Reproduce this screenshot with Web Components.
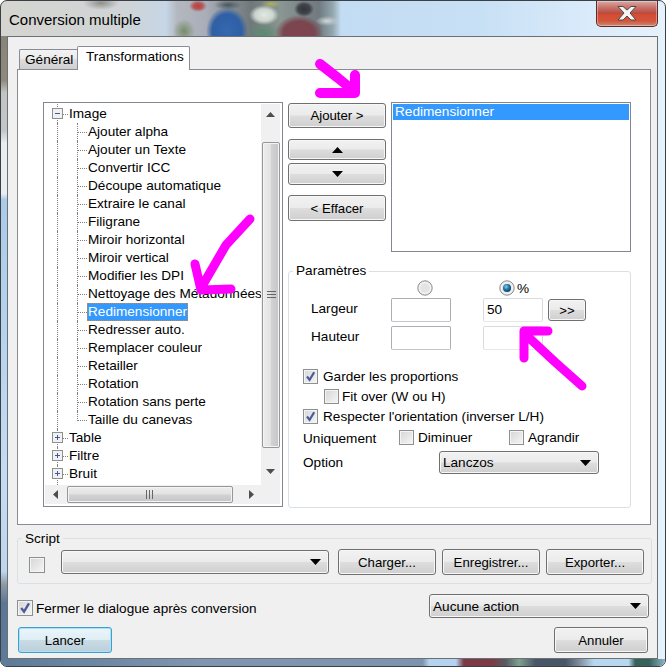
<!DOCTYPE html>
<html lang="fr">
<head>
<meta charset="utf-8">
<title>Conversion multiple</title>
<style>
  html, body { margin: 0; padding: 0; background: #fff; }
  body { width: 666px; height: 667px; overflow: hidden; font: 13.6px "Liberation Sans", Arial, sans-serif; color: #000; }
</style>
</head>
<body>
<win-dialog heading="Conversion multiple">
  <win-tabs>
    <span slot="tab">Général</span>
    <span slot="tab-active">Transformations</span>

    <div class="pane" style="display:grid;grid-template-columns:240px 98px 240px;column-gap:5px;grid-template-rows:150px 245px;row-gap:11px;">
      <win-tree style="grid-row:1 / span 2;">
        <tree-node kind="open" first>Image</tree-node>
        <tree-node>Ajouter alpha</tree-node>
        <tree-node>Ajouter un Texte</tree-node>
        <tree-node>Convertir ICC</tree-node>
        <tree-node>Découpe automatique</tree-node>
        <tree-node>Extraire le canal</tree-node>
        <tree-node>Filigrane</tree-node>
        <tree-node>Miroir horizontal</tree-node>
        <tree-node>Miroir vertical</tree-node>
        <tree-node>Modifier les DPI</tree-node>
        <tree-node>Nettoyage des Métadonnées</tree-node>
        <tree-node selected>Redimensionner</tree-node>
        <tree-node>Redresser auto.</tree-node>
        <tree-node>Remplacer couleur</tree-node>
        <tree-node>Retailler</tree-node>
        <tree-node>Rotation</tree-node>
        <tree-node>Rotation sans perte</tree-node>
        <tree-node last>Taille du canevas</tree-node>
        <tree-node kind="closed">Table</tree-node>
        <tree-node kind="closed">Filtre</tree-node>
        <tree-node kind="closed" tail>Bruit</tree-node>
      </win-tree>

      <div style="display:flex;flex-direction:column;padding-top:1px;">
        <win-button h="25">Ajouter &gt;</win-button>
        <win-button h="21" style="margin-top:11px;"><win-arrow dir="up"></win-arrow></win-button>
        <win-button h="22" style="margin-top:3px;"><win-arrow dir="down"></win-arrow></win-button>
        <win-button h="26" style="margin-top:10px;">&lt; Effacer</win-button>
      </div>

      <win-list>
        <span>Redimensionner</span>
      </win-list>

      <win-group label="Paramètres" style="grid-column:2 / span 2;">
        <div style="display:flex;flex-direction:column;padding:1px 0 0 14px;">
          <div style="display:grid;grid-template-columns:88px 60px 32px 60px 5px 38px;grid-template-rows:18px 24px 28px;align-items:center;">
            <span></span>
            <win-radio style="justify-self:center;margin:-2px 0 0 8px;"></win-radio>
            <span></span>
            <div style="display:flex;align-items:center;gap:2px;margin:-2px 0 0 16px;"><win-radio checked></win-radio><span>%</span></div>
            <span></span><span></span>

            <span style="padding-left:8px;margin-bottom:4px;">Largeur</span>
            <win-input></win-input>
            <span></span>
            <win-input value="50" soft></win-input>
            <span></span>
            <win-button h="22">&gt;&gt;</win-button>

            <span style="padding-left:8px;align-self:end;margin-bottom:6px;">Hauteur</span>
            <win-input style="align-self:end;"></win-input>
            <span></span>
            <win-input soft style="align-self:end;"></win-input>
            <span></span><span></span>
          </div>

          <div style="display:flex;flex-direction:column;gap:5px;margin-top:19px;">
            <win-check checked style="--gap:5px;">Garder les proportions</win-check>
            <win-check style="margin-left:21px;--gap:3px;">Fit over (W ou H)</win-check>
            <win-check checked style="--gap:5px;">Respecter l'orientation (inverser L/H)</win-check>
            <div style="display:grid;grid-template-columns:96px 110px auto;align-items:center;height:15px;">
              <span style="margin-top:2px;">Uniquement</span>
              <win-check>Diminuer</win-check>
              <win-check>Agrandir</win-check>
            </div>
          </div>

          <div style="display:grid;grid-template-columns:136px 160px;align-items:center;margin-top:7px;">
            <span>Option</span>
            <win-select h="23" style="width:160px;">Lanczos</win-select>
          </div>
        </div>
      </win-group>
    </div>
  </win-tabs>

  <win-group label="Script" style="margin-top:4px;width:635px;height:55px;--legend-top:2px;">
    <div style="display:flex;align-items:center;padding:2px 0 0 11px;">
      <win-check style="margin:5px 16px 0 0;--gap:0;" large></win-check>
      <win-select h="24" style="width:268px;margin-right:9px;"></win-select>
      <win-button h="26" style="width:98px;margin-right:6px;">Charger...</win-button>
      <win-button h="26" style="width:98px;margin-right:6px;">Enregistrer...</win-button>
      <win-button h="26" style="width:98px;">Exporter...</win-button>
    </div>
  </win-group>

  <div style="display:flex;justify-content:space-between;align-items:center;margin-top:10px;padding-right:3px;height:24px;">
    <win-check checked large style="margin-top:4px;--gap:3px;">Fermer le dialogue après conversion</win-check>
    <win-select h="24" style="width:220px;">Aucune action</win-select>
  </div>

  <div style="display:flex;justify-content:space-between;margin-top:9px;padding:0 4px 0 1px;">
    <win-button h="26" default style="width:94px;">Lancer</win-button>
    <win-button h="26" style="width:94px;">Annuler</win-button>
  </div>
</win-dialog>
<ink-marks></ink-marks>

<script>
// small helper so every element sets up its shadow root the same way
function shadow(el, html) {
  el.attachShadow({ mode: "open" }).innerHTML = html;
}

class WinDialog extends HTMLElement {
  connectedCallback() {
    shadow(this, `<style>
      :host { display: block; position: relative; box-sizing: border-box; width: 666px; height: 667px; padding: 35px 7px 7px 6px;
        border: 1px solid #3a4046; border-radius: 7px; overflow: hidden;
        background:
          radial-gradient(ellipse 9px 6px at 197px 5px, #b8403f 0, rgba(184,64,63,.8) 50%, rgba(184,64,63,0) 100%),
          radial-gradient(ellipse 14px 5px at 227px 4px, #46565a 0, rgba(70,86,90,0) 100%),
          radial-gradient(ellipse 21px 24px at 226px 30px, #3468b0 0, #2f5fa4 70%, rgba(47,95,164,0) 100%),
          radial-gradient(ellipse 10px 8px at 303px 8px, #34343c 0, rgba(52,52,60,.8) 60%, rgba(52,52,60,0) 100%),
          radial-gradient(ellipse 24px 18px at 298px 32px, #80444f 0, #7a4650 65%, rgba(122,70,80,0) 100%),
          radial-gradient(ellipse 15px 10px at 263px 14px, #e0eae2 0, rgba(224,234,226,.8) 60%, rgba(224,234,226,0) 100%),
          radial-gradient(ellipse 18px 10px at 262px 32px, #5a8a70 0, rgba(90,138,112,0) 100%),
          radial-gradient(ellipse 10px 4px at 270px 3px, #b0b060 0, rgba(176,176,96,0) 100%),
          radial-gradient(ellipse 11px 12px at 183px 30px, #768c68 0, rgba(118,140,104,0) 100%),
          radial-gradient(ellipse 12px 5px at 326px 20px, #d0d8da 0, rgba(208,216,218,0) 100%),
          radial-gradient(ellipse 18px 7px at 100px 2px, #8f8f8a 0, rgba(143,143,138,0) 100%),
          linear-gradient(to right, #d5d5d0 0, #d0d4d6 120px, #c6d6e6 165px, #b3b8c0 176px, #a8adb8 205px, #70787a 250px, #8a9692 280px, #707a80 318px, #94a8b0 332px, #c2dcf3 340px, #c8e0f5 480px, #dcecfb 600px, #e6f2fc 666px);
      }
      .frame-left { position: absolute; left: 0; top: 35px; bottom: 0; width: 6px;
        background: linear-gradient(to bottom, #8a8478 0, #8f897c 7%, #c4c4c2 9%, #c2c6c8 15%, #e8eef2 17%, #e8eef2 25%, #a9cbe8 26%, #c4dcf3 70%, #bcd6ee 85%, #8f9aa5 87%, #5a7896 90%, #5d7b98 100%); }
      .frame-bottom { position: absolute; left: 0; right: 0; bottom: 0; height: 7px;
        background: linear-gradient(to right, #5d7b98 0, #7f96b0 30%, #7c94ae 63.5%, #b5d3ee 64.5%, #b5d3ee 68.5%, #7c3a46 69.7%, #7c3a46 74%, #555b62 76%, #7fa090 78%, #4a5568 80.5%, #4a5568 85%, #7d8a98 87%, #b8d8f0 89.3%, #b8d8f0 94.5%, #37625a 95.5%, #37625a 97.6%, #8fb4c8 100%); }
      header { position: absolute; left: 8px; right: 7px; top: 0; height: 35px; display: flex; justify-content: space-between; }
      h1 { margin: 0; font: 400 15px/38px "Liberation Sans", Arial, sans-serif; color: #000; }
      .close { width: 62px; height: 26px; box-sizing: border-box; border: 1px solid #5c2b28; border-top: 0; border-radius: 0 0 5px 5px;
        display: flex; align-items: center; justify-content: center; box-shadow: inset 0 0 0 1px rgba(255,255,255,.35);
        background: linear-gradient(to bottom, #d9a9a3 0, #c9746c 25%, #b94a40 50%, #d64a30 52%, #d2563c 80%, #c98a78 100%); }
      .client { position: relative; box-sizing: border-box; height: 623px; padding: 9px 5px 0 9px; border: 1px solid #6b7075; background: #f0f0f0; }
    </style>
    <div class="frame-left"></div><div class="frame-bottom"></div>
    <header><h1>${this.getAttribute("heading")}</h1>
      <div class="close"><svg width="20" height="15" viewBox="0 0 20 15"><path d="M1 0.5h5l4 3.6 4-3.6h5l-6 6.5 6 7h-5l-4-4-4 4h-5l6-7z" fill="#f4f4f4" stroke="#4a4a4a" stroke-width="1"/></svg></div>
    </header>
    <div class="client"><slot></slot></div>`);
  }
}

class WinTabs extends HTMLElement {
  connectedCallback() {
    shadow(this, `<style>
      :host { display: block; width: 634px; }
      .strip { display: flex; align-items: flex-end; height: 23px; padding-left: 2px; position: relative; z-index: 1; }
      .tab { box-sizing: border-box; border: 1px solid #898c95; border-bottom: 0; border-right: 0; height: 20px; width: 58px; padding-left: 5px; line-height: 20px;
        background: linear-gradient(to bottom, #f2f2f2, #ebebeb 45%, #dddddd 50%, #cfcfcf); border-radius: 2px 0 0 0; }
      .tab.on { border-right: 1px solid #898c95; height: 24px; width: 113px; margin-bottom: -1px; padding-left: 8px; line-height: 20px; background: #fff; border-radius: 2px 2px 0 0; }
      .body { box-sizing: border-box; height: 456px; border: 1px solid #898c95; background: #fff; padding: 32px 0 0 25px; }
    </style>
    <div class="strip"><div class="tab"><slot name="tab"></slot></div><div class="tab on"><slot name="tab-active"></slot></div></div>
    <div class="body"><slot></slot></div>`);
  }
}

class WinButton extends HTMLElement {
  connectedCallback() {
    const h = this.getAttribute("h") || 25;
    const isDefault = this.hasAttribute("default");
    shadow(this, `<style>
      :host { display: flex; box-sizing: border-box; height: ${h}px; align-items: center; justify-content: center; border-radius: 3px; font-size: 13.2px;
        border: 1px solid ${isDefault ? "#3c9fd0" : "#707070"}; color: #000;
        box-shadow: inset 0 0 0 1px ${isDefault ? "#a8e2f8" : "#f7f7f7"};
        background: ${isDefault ? "linear-gradient(to bottom,#eaf5fa,#dfeef5 48%,#c9dbe4 52%,#bcd0da)" : "linear-gradient(to bottom,#f2f2f2,#ebebeb 48%,#dddddd 52%,#cfcfcf)"}; }
    </style><slot></slot>`);
  }
}

class WinArrow extends HTMLElement {
  connectedCallback() {
    const up = this.getAttribute("dir") === "up";
    shadow(this, `<style>:host { display: inline-flex; }</style>
      <svg width="11" height="6" viewBox="0 0 11 6"><path d="${up ? "M5.5 0L11 6H0z" : "M0 0h11L5.5 6z"}" fill="#000"/></svg>`);
  }
}

class WinSelect extends HTMLElement {
  connectedCallback() {
    const h = this.getAttribute("h") || 24;
    shadow(this, `<style>
      :host { display: flex; box-sizing: border-box; height: ${h}px; align-items: center; justify-content: space-between; padding: 0 7px 0 3px; border-radius: 3px;
        border: 1px solid #707070; box-shadow: inset 0 0 0 1px #f7f7f7;
        background: linear-gradient(to bottom,#f2f2f2,#ebebeb 48%,#dddddd 52%,#cfcfcf); }
    </style><span><slot></slot></span>
    <svg width="11" height="6" viewBox="0 0 11 6"><path d="M0 0h11L5.5 6z" fill="#000"/></svg>`);
  }
}

class WinCheck extends HTMLElement {
  connectedCallback() {
    const size = this.hasAttribute("large") ? 16 : 15;
    const tick = this.hasAttribute("checked")
      ? `<svg width="${size - 2}" height="${size - 2}" viewBox="0 0 13 13"><path d="M3 6.5l2.6 3.4L10.2 2.2" fill="none" stroke="#4a5c9a" stroke-width="2.2"/></svg>`
      : "";
    shadow(this, `<style>
      :host { display: flex; align-items: center; gap: var(--gap, 4px); height: 15px; white-space: nowrap; }
      .box { box-sizing: border-box; flex: none; width: ${size}px; height: ${size}px; border: 1px solid #8e8f8f; display: flex;
        box-shadow: inset 0 0 0 1px #f4f4f4; background: linear-gradient(135deg, #d6d6d6, #f6f6f6); }
    </style><div class="box">${tick}</div><span><slot></slot></span>`);
  }
}

class WinRadio extends HTMLElement {
  connectedCallback() {
    const on = this.hasAttribute("checked");
    shadow(this, `<style>:host { display: inline-flex; width: 16px; height: 16px; }</style>
      <svg width="16" height="16" viewBox="0 0 16 16">
        <defs>
          <radialGradient id="dot" cx=".4" cy=".35" r=".7"><stop offset="0" stop-color="#7fd4f0"/><stop offset=".55" stop-color="#1a6d9c"/><stop offset="1" stop-color="#0d3f66"/></radialGradient>
        </defs>
        <circle cx="8" cy="8" r="7.2" fill="#e9e9e9" stroke="#8d8d8d"/>
        <circle cx="8" cy="8" r="5.4" fill="#e4e4e4" stroke="#fafafa" stroke-width=".8"/>
        ${on ? '<circle cx="8" cy="8" r="4" fill="url(#dot)"/>' : ""}
      </svg>`);
  }
}

class WinInput extends HTMLElement {
  connectedCallback() {
    const soft = this.hasAttribute("soft");
    shadow(this, `<style>
      :host { display: block; box-sizing: border-box; width: 60px; height: 24px; background: #fff; border-radius: 2px; padding-left: 3px; line-height: 22px;
        border: 1px solid ${soft ? "#d9dbdd" : "#abadb3"}; border-bottom-color: ${soft ? "#e6e7e8" : "#c4c6ca"}; }
    </style>${this.getAttribute("value") || ""}`);
  }
}

class WinList extends HTMLElement {
  connectedCallback() {
    shadow(this, `<style>
      :host { display: block; box-sizing: border-box; border: 1px solid #828790; background: #fff; padding: 1px; }
      ::slotted(span) { display: block; background: #3399ff; color: #fff; height: 16px; line-height: 16px; padding-left: 2px; }
    </style><slot></slot>`);
  }
}

class WinGroup extends HTMLElement {
  connectedCallback() {
    shadow(this, `<style>
      :host { display: block; box-sizing: border-box; min-width: 0; }
      fieldset { box-sizing: border-box; margin: 0; padding: 0; height: 100%; min-width: 0; border: 1px solid #d9e0e5; border-radius: 3px; }
      legend { margin-left: 4px; padding: var(--legend-top, 0) 3px 0; line-height: 16px; }
    </style><fieldset><legend>${this.getAttribute("label")}</legend><slot></slot></fieldset>`);
  }
}

class ScrollBar extends HTMLElement {
  connectedCallback() {
    const vertical = this.getAttribute("dir") === "v";
    const grip = vertical
      ? '<svg width="9" height="8"><path d="M0 .5h9M0 3.5h9M0 6.5h9" stroke="#666"/></svg>'
      : '<svg width="8" height="9"><path d="M.5 0v9M3.5 0v9M6.5 0v9" stroke="#666"/></svg>';
    const arrow = (d) => `<svg width="9" height="9" viewBox="0 0 9 9"><path d="${d}" fill="#4d4d4d"/></svg>`;
    const a = vertical ? arrow("M4.5 2L9 7H0z") : arrow("M2 4.5L7 0v9z");
    const b = vertical ? arrow("M0 2h9L4.5 7z") : arrow("M7 4.5L2 0v9z");
    shadow(this, `<style>
      :host { display: flex; flex-direction: ${vertical ? "column" : "row"}; background: #f0f0f0; ${vertical ? "width:19px" : "height:19px"}; }
      .end { flex: none; ${vertical ? "height:20px" : "width:20px"}; display: flex; align-items: center; justify-content: center; }
      .end.low { ${vertical ? "padding-bottom:4px" : ""}; }
      .gap { flex: none; ${vertical ? "height:18px" : "width:2px"}; }
      .thumb { box-sizing: border-box; ${vertical ? "height:306px" : "width:166px"}; margin: ${vertical ? "0 0 0 1px" : "1px 0 1px 0"}; border: 1px solid #979797; border-radius: 2px;
        display: flex; align-items: center; justify-content: center; box-shadow: inset 0 0 0 1px #f4f4f4;
        background: linear-gradient(${vertical ? "to right" : "to bottom"}, #ededed, #e2e2e2 48%, #d2d2d2 52%, #c5c5c5); }
      .rest { flex: 1; }
    </style>
    <div class="end">${a}</div><div class="gap"></div>
    <div class="thumb">${grip}</div><div class="rest"></div>
    <div class="end low">${b}</div>`);
  }
}

class WinTree extends HTMLElement {
  connectedCallback() {
    shadow(this, `<style>
      :host { display: grid; box-sizing: border-box; height: 405px; border: 1px solid #828790; background: #fff; padding: 1px 2px 2px 1px;
        grid-template-columns: 1fr 19px; grid-template-rows: 1fr 19px; }
      .view { overflow: hidden; padding-top: 1px; position: relative; }
      .corner { background: #f0f0f0; }
    </style>
    <div class="view"><slot></slot></div>
    <scroll-bar dir="v"></scroll-bar>
    <scroll-bar dir="h"></scroll-bar>
    <div class="corner"></div>`);
  }
}

class TreeNode extends HTMLElement {
  connectedCallback() {
    const kind = this.getAttribute("kind");
    const top = kind !== null;
    const selected = this.hasAttribute("selected");
    const last = this.hasAttribute("last");
    const tail = this.hasAttribute("tail");
    const first = this.hasAttribute("first");
    const sign = kind === "open" ? "M3 5.5h5" : "M3 5.5h5M5.5 3v5";
    shadow(this, `<style>
      :host { display: block; position: relative; height: 18px; white-space: nowrap; line-height: 18px; padding-left: ${top ? 24 : 43}px; }
      .trunk { position: absolute; left: 12px; top: ${first ? -2 : 0}px; bottom: ${tail ? -4 : 0}px; border-left: 1px dotted #808080; }
      .stem { position: absolute; left: 32px; top: 0; ${last ? "height:10px" : "bottom:0"}; border-left: 1px dotted #808080; }
      .twig { position: absolute; left: ${top ? 18 : 33}px; top: 9px; width: ${top ? 5 : 9}px; border-top: 1px dotted #808080; }
      svg { position: absolute; left: 7px; top: 3px; }
      .label { display: inline-block; ${selected ? "background:#3399ff;color:#fff;outline:1px dotted #d08a30;outline-offset:-1px;margin-left:-1px;padding:0 1px;" : ""} }
    </style>
    <span class="trunk"></span>
    ${top ? "" : '<span class="stem"></span>'}
    <span class="twig"></span>
    ${top ? `<svg width="11" height="11"><rect x=".5" y=".5" width="10" height="10" fill="#f1f1f1" stroke="#8e8f8f"/><path d="${sign}" stroke="#3d5aa0" stroke-width="1" fill="none"/></svg>` : ""}
    <span class="label"><slot></slot></span>`);
  }
}

// pink marker strokes drawn on top of the screenshot
class InkMarks extends HTMLElement {
  connectedCallback() {
    shadow(this, `<style>:host { position: absolute; left: 0; top: 0; width: 666px; height: 667px; pointer-events: none; }</style>
      <svg width="666" height="667" fill="none" stroke="#ff00ff" stroke-width="9" stroke-linecap="round" stroke-linejoin="round">
        <path stroke-width="10" d="M320 64L338 78 355 92M320 93H355V75"/>
        <path d="M250 219L226 245 201 288M195 264L201 290 231 289"/>
        <path d="M582 386L555 362 525 334M524 358L524 331 548 331"/>
      </svg>`);
  }
}

customElements.define("win-dialog", WinDialog);
customElements.define("win-tabs", WinTabs);
customElements.define("win-button", WinButton);
customElements.define("win-arrow", WinArrow);
customElements.define("win-select", WinSelect);
customElements.define("win-check", WinCheck);
customElements.define("win-radio", WinRadio);
customElements.define("win-input", WinInput);
customElements.define("win-list", WinList);
customElements.define("win-group", WinGroup);
customElements.define("scroll-bar", ScrollBar);
customElements.define("win-tree", WinTree);
customElements.define("tree-node", TreeNode);
customElements.define("ink-marks", InkMarks);
</script>
</body>
</html>
